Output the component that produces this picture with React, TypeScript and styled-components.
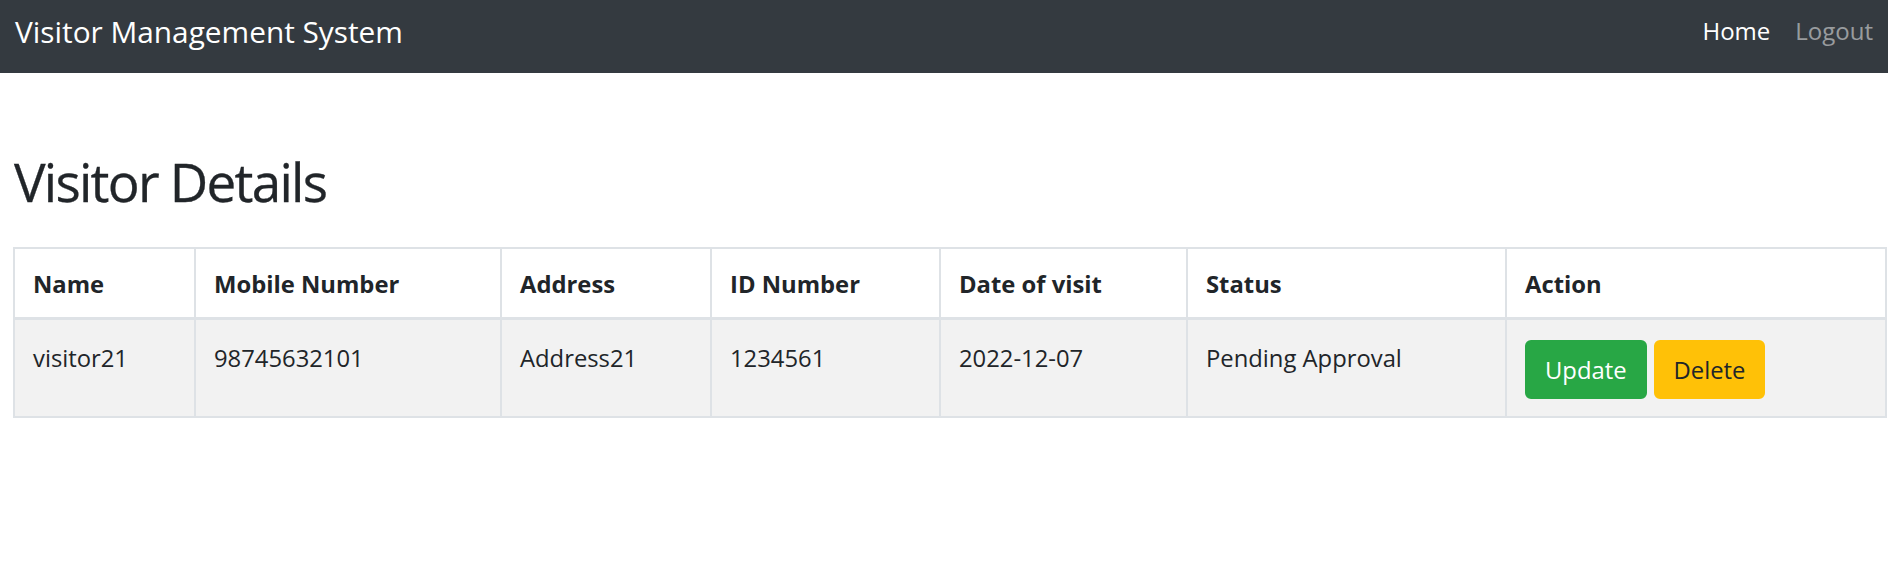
import React from "react";
import styled, { createGlobalStyle } from "styled-components";

const FONT = `"Open Sans", "Noto Sans", "Liberation Sans", sans-serif`;

const GlobalStyle = createGlobalStyle`
  html, body { margin: 0; padding: 0; background: #fff; }
  body { font-family: ${FONT}; color: #212529; -webkit-font-smoothing: antialiased; }
  * { box-sizing: border-box; }
`;

const Navbar = styled.nav`
  height: 73px;
  background: #343a40;
  display: flex;
  align-items: flex-start;
  justify-content: space-between;
  padding: 9px 15px 0 15px;
`;

const Brand = styled.a`
  font-size: 29.8px;
  line-height: 45px;
  color: #fff;
  text-decoration: none;
  white-space: nowrap;
`;

const NavLinks = styled.div`
  display: flex;
  gap: 25px;
  margin-top: 4px;
`;

const NavLink = styled.a<{ $active?: boolean }>`
  font-size: 24px;
  line-height: 36px;
  color: ${(p) => (p.$active ? "#fff" : "rgba(255,255,255,0.5)")};
  text-decoration: none;
`;

const Main = styled.main`
  padding: 0 1px 0 13px;
`;

const Title = styled.h1`
  margin: 73px 0 29px 1px;
  font-size: 53px;
  line-height: 72px;
  font-weight: 500;
  letter-spacing: -1.75px;
  color: #212529;
  -webkit-text-stroke: 0.3px #212529;
`;

const Table = styled.div`
  display: grid;
  grid-template-columns: 179px 306px 210px 229px 247px 319px 380px;
  grid-template-rows: 71px 96px;
  border: 2px solid #dee2e6;
  width: max-content;
`;

const HeadCell = styled.div<{ $first?: boolean }>`
  background: #fff;
  border-bottom: 3px solid #dee2e6;
  border-left: ${(p) => (p.$first ? "none" : "2px solid #dee2e6")};
  padding: 16.5px 18px 0 18px;
  font-size: 23.8px;
  line-height: 36px;
  font-weight: 700;
  white-space: nowrap;
`;

const Cell = styled.div<{ $first?: boolean }>`
  background: #f2f2f2;
  border-left: ${(p) => (p.$first ? "none" : "2px solid #dee2e6")};
  padding: 19.5px 18px 0 18px;
  font-size: 23.8px;
  line-height: 36px;
  white-space: nowrap;
`;

const Actions = styled.div`
  display: flex;
  gap: 7px;
  margin-top: 0.5px;
`;

const Button = styled.button<{ $variant: "success" | "warning" }>`
  height: 59px;
  padding: 0 18px;
  font-family: ${FONT};
  font-size: 23.8px;
  line-height: 36px;
  border-radius: 6px;
  border: 2px solid ${(p) => (p.$variant === "success" ? "#28a745" : "#ffc107")};
  background: ${(p) => (p.$variant === "success" ? "#28a745" : "#ffc107")};
  color: ${(p) => (p.$variant === "success" ? "#fff" : "#212529")};
  cursor: pointer;
`;

const headers = [
  "Name",
  "Mobile Number",
  "Address",
  "ID Number",
  "Date of visit",
  "Status",
  "Action",
];

const row = [
  "visitor21",
  "98745632101",
  "Address21",
  "1234561",
  "2022-12-07",
  "Pending Approval",
];

export default function App() {
  return (
    <>
      <GlobalStyle />
      <Navbar>
        <Brand href="#">Visitor Management System</Brand>
        <NavLinks>
          <NavLink $active href="#">
            Home
          </NavLink>
          <NavLink href="#">Logout</NavLink>
        </NavLinks>
      </Navbar>
      <Main>
        <Title>Visitor Details</Title>
        <Table>
          {headers.map((h, i) => (
            <HeadCell key={h} $first={i === 0}>
              {h}
            </HeadCell>
          ))}
          {row.map((v, i) => (
            <Cell key={v} $first={i === 0}>
              {v}
            </Cell>
          ))}
          <Cell>
            <Actions>
              <Button $variant="success">Update</Button>
              <Button $variant="warning">Delete</Button>
            </Actions>
          </Cell>
        </Table>
      </Main>
    </>
  );
}
